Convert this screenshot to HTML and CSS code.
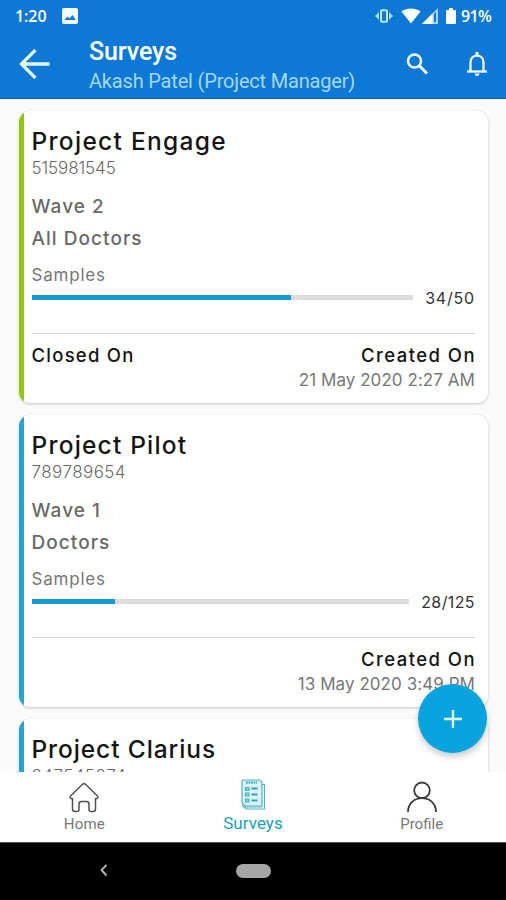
FILE: index.html
```html
<!DOCTYPE html>
<html lang="en">
<head>
<meta charset="utf-8">
<title>Surveys</title>
<link rel="stylesheet" href="styles.css">
</head>
<body>
<div class="app">
  <header class="top">
    <div class="status">
      <span class="clock">1:20</span>
      <svg class="picture" width="16" height="16" viewBox="0 0 16 16"><rect width="16" height="16" rx="2" fill="#f2faff"/><path d="M2.500 12 5.500 8.500l2 2L10.500 7l3.300 5z" fill="#0d78d5"/></svg>
      <svg class="vibrate" width="18" height="14" viewBox="0 0 18 14"><rect x="6" y="1.300" width="6" height="11.400" rx="1" fill="none" stroke="#c4e6fa" stroke-width="2"/><path d="M4 3v8L0 7zM14 3v8l4-4z" fill="#a9d8f7"/></svg>
      <svg class="wifi" width="20" height="16" viewBox="0 0 20 16"><path d="M.5 3.600C6-.7 14-.7 19.500 3.600L10 15.500z" fill="#fff"/></svg>
      <svg class="signal" width="16" height="16" viewBox="0 0 16 16"><path d="M0 16 16 0v16z" fill="#a5d5f5"/><path d="M0 16 10.500 5.500V16z" fill="#fff"/><path d="M12 6v8h2V4z" fill="#0d78d5"/></svg>
      <svg class="battery" width="10" height="16" viewBox="0 0 10 16"><path d="M3 0h4v2h2q1 0 1 1v12q0 1-1 1H1q-1 0-1-1V3q0-1 1-1h2z" fill="#fff"/></svg>
      <span class="percent">91%</span>
    </div>
    <div class="bar">
      <svg class="back" width="32" height="32" viewBox="0 0 32 32" fill="none" stroke="#e4f5ff" stroke-width="3.300"><path d="M30.500 16H3M16.500 2 2.500 16l14 14"/></svg>
      <div class="heading">
        <h1>Surveys</h1>
        <p>Akash Patel (Project Manager)</p>
      </div>
      <svg class="search" width="24" height="24" viewBox="0 0 24 24" fill="none" stroke="#f2fbff" stroke-width="2.500"><circle cx="9.500" cy="9" r="6.500"/><path d="m14 13.500 8 8" stroke-width="3"/></svg>
      <svg class="bell" width="22" height="26" viewBox="0 0 22 26" fill="none" stroke="#f2fbff" stroke-width="2.300"><path d="M4.500 20V11.500C4.500 2.300 17.500 2.300 17.500 11.500V20"/><path d="M1 20.500h20"/><path d="M11 1v3" stroke-width="3"/><path d="M8.500 22.500h5q-.5 2.500-2.500 2.500t-2.500-2.500" fill="#f2fbff" stroke="none"/></svg>
    </div>
  </header>

  <main class="list">
    <article class="card closed">
      <h2 class="t-engage">Project Engage</h2>
      <p class="id">515981545</p>
      <p class="line first">Wave 2</p>
      <p class="line doctors">All Doctors</p>
      <p class="samples">Samples</p>
      <div class="progress"><div class="track"><div class="fill" style="width:68%"></div></div><span class="count">34/50</span></div>
      <footer><div class="when"><b class="closed-label">Closed On</b></div><div class="when end"><b>Created On</b><span>21 May 2020 2:27 AM</span></div></footer>
    </article>
    <article class="card">
      <h2 class="t-pilot">Project Pilot</h2>
      <p class="id wide">789789654</p>
      <p class="line first">Wave 1</p>
      <p class="line doctors">Doctors</p>
      <p class="samples">Samples</p>
      <div class="progress"><div class="track"><div class="fill" style="width:22%"></div></div><span class="count long">28/125</span></div>
      <footer><div class="when"></div><div class="when end"><b>Created On</b><span>13 May 2020 3:49 PM</span></div></footer>
    </article>
    <article class="card">
      <h2 class="t-clarius">Project Clarius</h2>
      <p class="id wide">347545874</p>
    </article>
  </main>
  <button class="fab" aria-label="Add survey"><svg width="18" height="18" viewBox="0 0 18 18" stroke="#e8f8ff" stroke-width="2.400"><path d="M9 0v18M0 9h18"/></svg></button>

  <nav class="tabs">
    <a class="tab">
      <svg width="32" height="32" viewBox="0 0 32 32" fill="none" stroke="#505050" stroke-width="1.500" stroke-linejoin="round"><path d="M4.500 17.500H3q-2-1 0-3L14.500 3.300q1.500-1.300 3 0L29 14.500q2 2 0 3h-1.500V28q0 2.500-2.500 2.500h-2q-2 0-2-2V23q0-2.500-2.500-2.500h-5Q11 20.500 11 23v5.500q0 2-2 2H7q-2.500 0-2.500-2.500z"/></svg>
      <span>Home</span>
    </a>
    <a class="tab active">
      <svg width="26" height="32" viewBox="0 0 26 32" fill="none" stroke="#55b3c0" stroke-width="1.200"><path d="M4 1h15.500l2.500 2v24H5L2 24V3q0-2 2-2z" fill="#d5f5fa"/><path d="M22 5.500h2.500V30H6L2 26M22.500 28H5"/><path d="M6 3.500h11" stroke-width="2.500" stroke-dasharray="1.800 .7"/><path d="M5.500 8.500H9v3H5.500zM5.500 14H9v3H5.500zM5.500 20H9v3H5.500z" fill="#8ac7dc"/><path d="M11.500 9.500h6M11.500 15.500h6M11.500 21.500h6" stroke="#4b95b5" stroke-width="2"/></svg>
      <span>Surveys</span>
    </a>
    <a class="tab profile">
      <svg width="32" height="32" viewBox="0 0 32 32" fill="none" stroke="#383838" stroke-width="1.800"><circle cx="16" cy="9.300" r="7.800"/><path d="M2 31C2 12.500 30 12.500 30 31"/></svg>
      <span>Profile</span>
    </a>
  </nav>
  <div class="system">
    <svg width="10" height="14" viewBox="0 0 10 14" fill="none" stroke="#b5b5b5" stroke-width="1.900"><path d="M7.500 1 2.500 6l5 5.500"/></svg>
    <div class="pill"></div>
  </div>
</div>
</body>
</html>
```
FILE: styles.css
```css
* { box-sizing: border-box; }
body, h1, h2, p { margin: 0; }
.app { position: relative; width: 506px; height: 900px; display: flex; flex-direction: column; overflow: hidden; background: #fafafa; font-family: Inter, sans-serif; }
.top { flex: none; height: 99px; background: #0d78d5; border-bottom: 1px solid #075ebd; color: #fff; font-family: Roboto, sans-serif; }
.status { height: 32px; display: flex; align-items: center; padding: 0 14px 0 15px; font-family: "Open Sans", sans-serif; font-weight: 600; font-size: 16px; letter-spacing: -.1px; }
.clock { width: 47px; }
.vibrate { margin-left: auto; }
.wifi { margin-left: 8px; }
.signal { margin-left: 1px; }
.battery { margin: 0 5px 0 8px; }
.percent { width: 31px; letter-spacing: -.6px; white-space: nowrap; }
.bar { display: flex; align-items: center; height: 64px; padding: 0 18px 0 19px; }
.heading { margin-left: 38px; flex: 1; padding-top: 4px; }
.heading h1 { font-size: 25px; line-height: 30px; font-weight: 500; letter-spacing: -.1px; }
.heading p { font-size: 20px; line-height: 28px; letter-spacing: -.18px; color: #a4d8f8; white-space: nowrap; }
.bell { margin-left: 37px; }
.list { flex: 1; min-height: 0; overflow: hidden; padding: 12px 18px 0 19px; display: flex; flex-direction: column; gap: 12px; }
.card { position: relative; flex: none; height: 292px; padding: 15px 13px 0 12.500px; background: #fff; border-radius: 11px; box-shadow: 0 1px 3px rgba(0,0,0,.22); color: #686868; }
.card::before { content: ""; position: absolute; inset: 0; border-radius: inherit; background: linear-gradient(90deg, #20a6d0 5px, transparent 5px); }
.card.closed::before { background: linear-gradient(90deg, #92c80b 5px, transparent 5px); }
.card h2 { font-size: 24.500px; line-height: 31px; font-weight: 500; color: #151515; white-space: nowrap; }
.card .t-engage { letter-spacing: 1.300px; }
.card .t-pilot { letter-spacing: 1.200px; }
.card .t-clarius { letter-spacing: .9px; }
.id { font-size: 17px; line-height: 23px; font-weight: 300; letter-spacing: -.1px; }
.id.wide { letter-spacing: .45px; }
.line { font-size: 19px; line-height: 32px; font-weight: 500; letter-spacing: 1.050px; }
.first { margin-top: 11px; }
.samples { margin-top: 9px; font-size: 17px; line-height: 22px; letter-spacing: .8px; color: #777; }
.progress { display: flex; align-items: center; height: 22px; }
.track { flex: 1; height: 5px; background: #dcdcdc; }
.fill { height: 5px; background: #129bd1; }
.count { margin: 2px 0 0 12px; font-size: 16px; letter-spacing: .8px; color: #333; }
.count.long { letter-spacing: .4px; }
.card footer { margin-top: 25px; border-top: 1px solid #d5d5d5; padding-top: 9px; display: flex; justify-content: space-between; }
.when { display: flex; flex-direction: column; white-space: nowrap; }
.when.end { align-items: flex-end; }
.when b { font-size: 18.500px; line-height: 25px; font-weight: 500; letter-spacing: 1.450px; margin-right: -1px; color: #151515; }
.when .closed-label { letter-spacing: 1.250px; }
.when span { font-size: 17px; line-height: 25px; letter-spacing: .06px; color: #777; }
.fab { position: absolute; left: 418px; top: 684px; width: 69px; height: 69px; border: 0; border-radius: 50%; background: #06a3df; display: grid; place-items: center; padding: 0; box-shadow: 0 4px 6px rgba(0,0,0,.2); }
.tabs { flex: none; height: 70px; background: #fff; display: grid; grid-template-columns: repeat(3, 1fr); position: relative; font-family: Roboto, sans-serif; }
.tab { display: flex; flex-direction: column; align-items: center; padding-top: 9px; color: #777; font-size: 15px; line-height: 22px; letter-spacing: .2px; }
.tab.active { padding-top: 7px; color: #16a2b5; font-size: 17px; line-height: 25px; letter-spacing: .05px; }
.tab svg { flex: none; }
.profile { letter-spacing: 0; }
.system { flex: none; height: 58px; background: #000; border-top: 1px solid #555; display: grid; grid-template-columns: 10px 35px; justify-content: start; align-items: center; column-gap: 127px; padding: 0 0 2px 99px; }
.pill { width: 35px; height: 14px; border-radius: 7px; background: #a5a5a5; }
```
